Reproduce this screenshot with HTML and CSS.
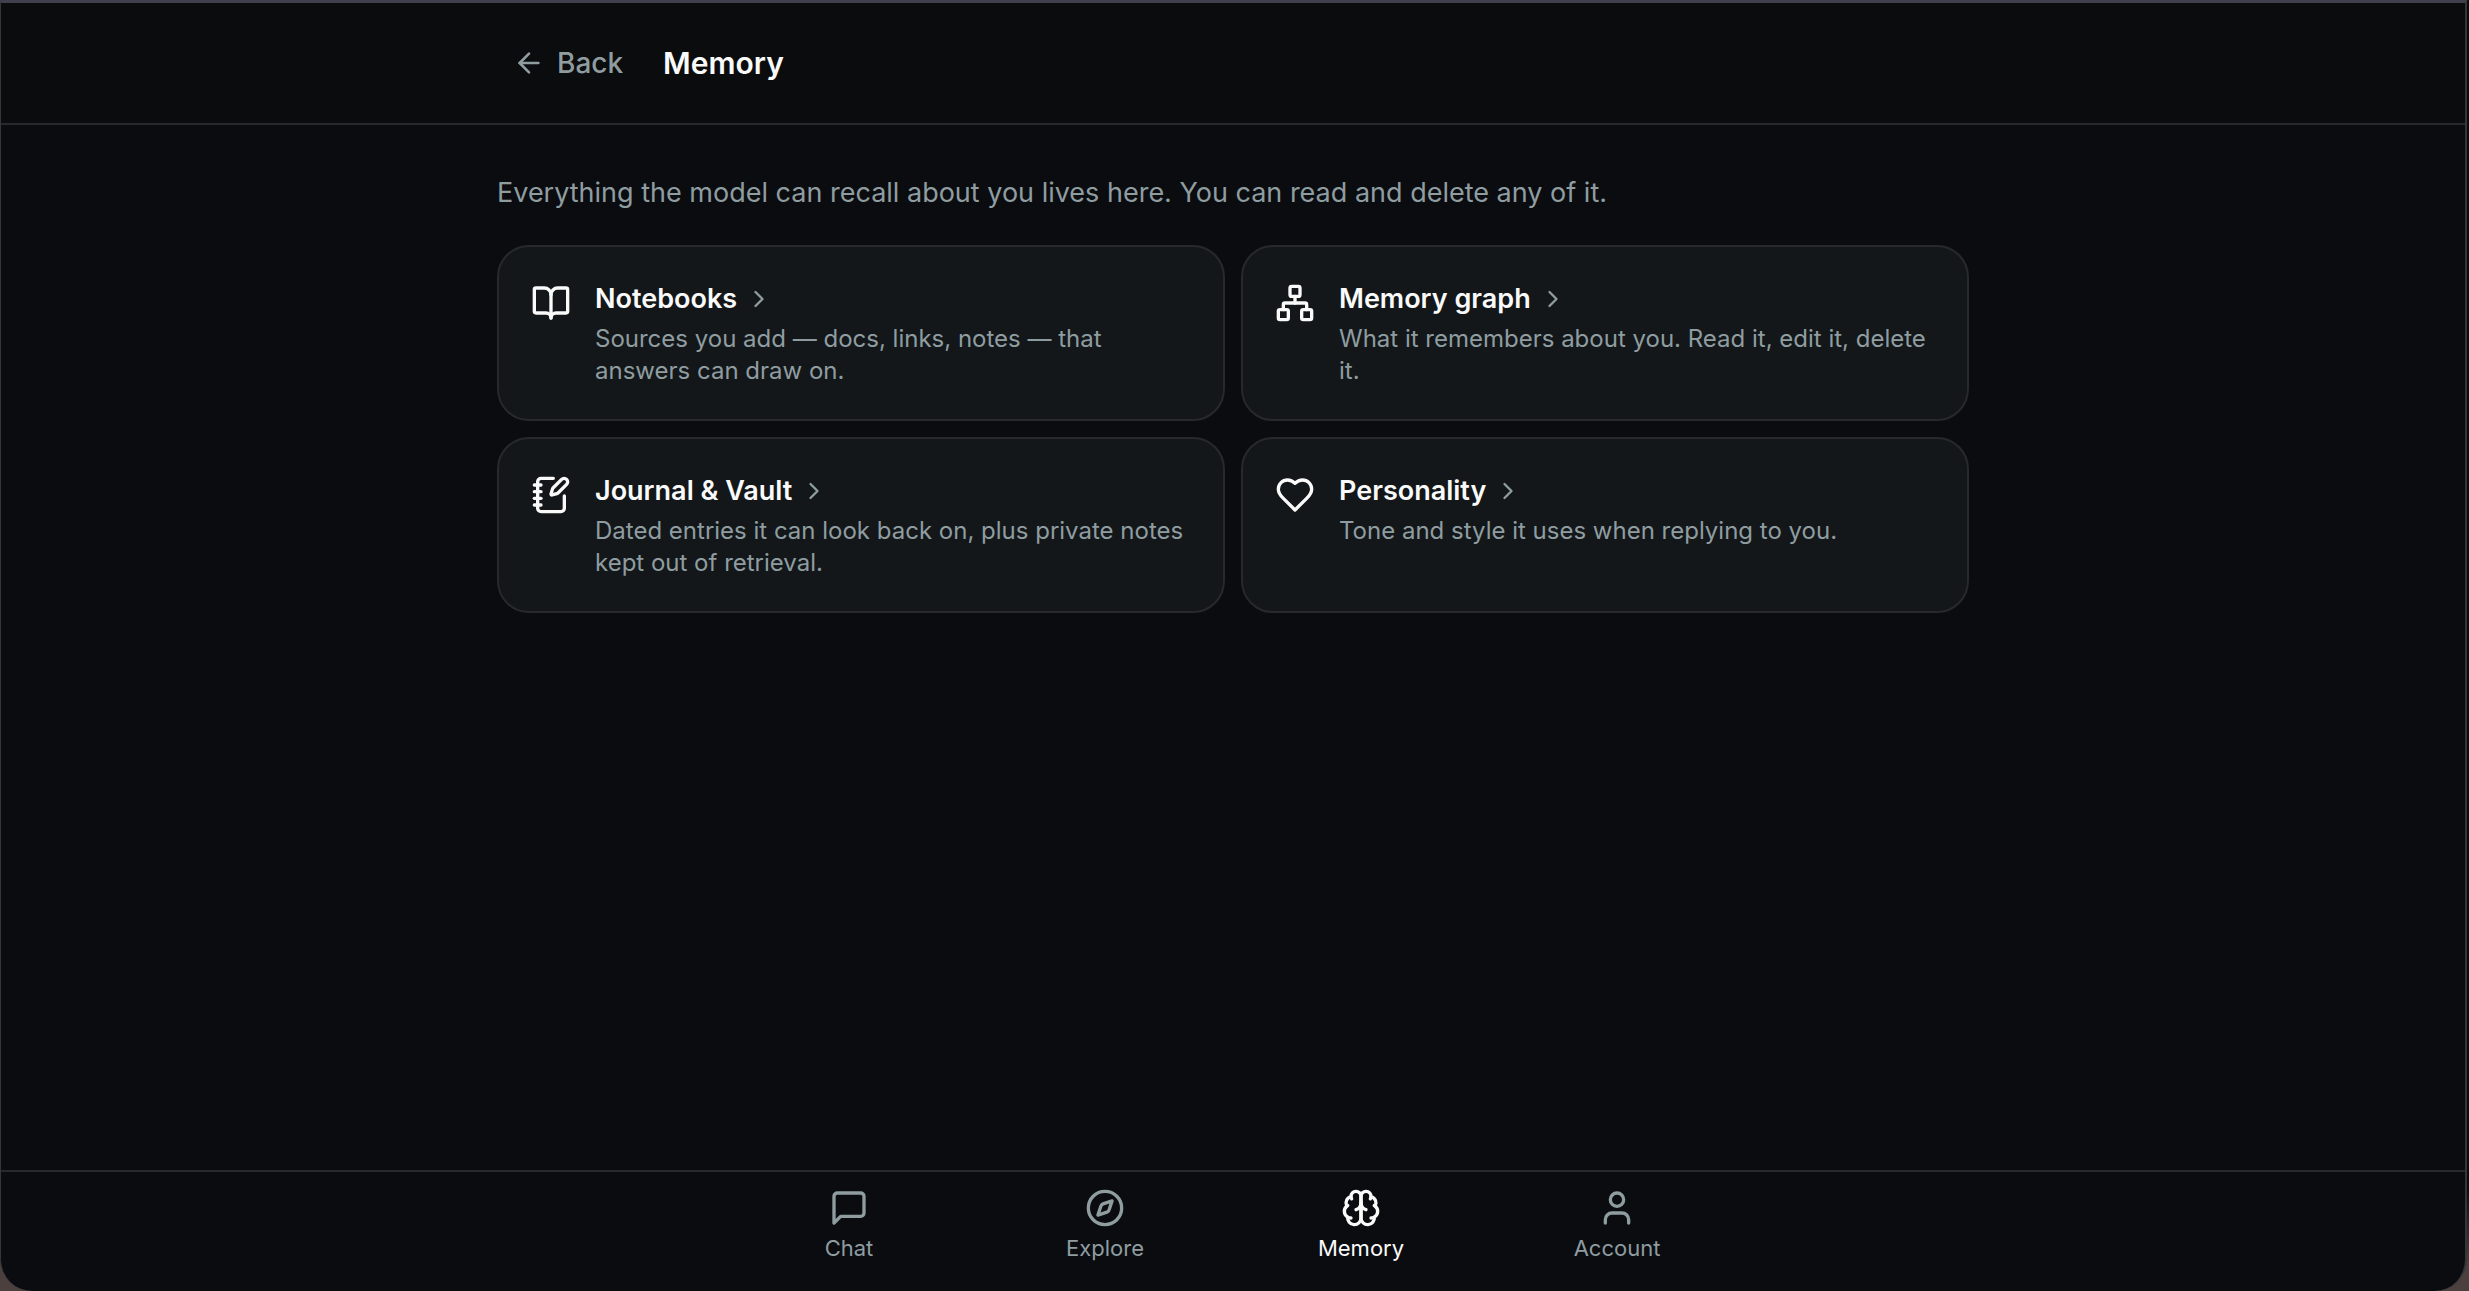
FILE: index.html
```html
<!DOCTYPE html>
<html lang="en">
<head>
<meta charset="utf-8">
<meta name="viewport" content="width=device-width, initial-scale=1">
<title>Memory</title>
<link rel="stylesheet" href="styles.css">
</head>
<body>
<div class="window">
  <header class="header">
    <div class="container header-row">
      <button class="back" type="button">
        <svg class="icon icon-md" viewBox="0 0 24 24" aria-hidden="true"><path d="m12 19-7-7 7-7"/><path d="M19 12H5"/></svg>
        Back
      </button>
      <h1 class="title">Memory</h1>
    </div>
  </header>

  <main class="container main">
    <p class="intro">Everything the model can recall about you lives here. You can read and delete any of it.</p>
    <div class="cards">
      <a class="card" href="#notebooks">
        <svg class="icon icon-lg" viewBox="0 0 24 24" aria-hidden="true"><path d="M12 7v14"/><path d="M3 18a1 1 0 0 1-1-1V4a1 1 0 0 1 1-1h5a4 4 0 0 1 4 4 4 4 0 0 1 4-4h5a1 1 0 0 1 1 1v13a1 1 0 0 1-1 1h-6a3 3 0 0 0-3 3 3 3 0 0 0-3-3z"/></svg>
        <div class="card-body">
          <h2 class="card-title">Notebooks <svg class="icon icon-sm" viewBox="0 0 24 24" aria-hidden="true"><path d="m9 18 6-6-6-6"/></svg></h2>
          <p class="card-text">Sources you add — docs, links, notes — that answers can draw on.</p>
        </div>
      </a>
      <a class="card" href="#graph">
        <svg class="icon icon-lg" viewBox="0 0 24 24" aria-hidden="true"><rect x="16" y="16" width="6" height="6" rx="1"/><rect x="2" y="16" width="6" height="6" rx="1"/><rect x="9" y="2" width="6" height="6" rx="1"/><path d="M5 16v-3a1 1 0 0 1 1-1h12a1 1 0 0 1 1 1v3"/><path d="M12 12V8"/></svg>
        <div class="card-body">
          <h2 class="card-title">Memory graph <svg class="icon icon-sm" viewBox="0 0 24 24" aria-hidden="true"><path d="m9 18 6-6-6-6"/></svg></h2>
          <p class="card-text">What it remembers about you. Read it, edit it, delete it.</p>
        </div>
      </a>
      <a class="card" href="#journal">
        <svg class="icon icon-lg" viewBox="0 0 24 24" aria-hidden="true"><path d="M13.4 2H6a2 2 0 0 0-2 2v16a2 2 0 0 0 2 2h12a2 2 0 0 0 2-2v-7.4"/><path d="M2 6h4"/><path d="M2 10h4"/><path d="M2 14h4"/><path d="M2 18h4"/><path d="M21.378 5.626a1 1 0 1 0-3.004-3.004l-5.01 5.012a2 2 0 0 0-.506.854l-.837 2.87a.5.5 0 0 0 .62.62l2.87-.837a2 2 0 0 0 .854-.506z"/></svg>
        <div class="card-body">
          <h2 class="card-title">Journal &amp; Vault <svg class="icon icon-sm" viewBox="0 0 24 24" aria-hidden="true"><path d="m9 18 6-6-6-6"/></svg></h2>
          <p class="card-text">Dated entries it can look back on, plus private notes kept out of retrieval.</p>
        </div>
      </a>
      <a class="card" href="#personality">
        <svg class="icon icon-lg" viewBox="0 0 24 24" aria-hidden="true"><path d="M19 14c1.490-1.460 3-3.210 3-5.500A5.500 5.500 0 0 0 16.500 3c-1.760 0-3 .5-4.500 2-1.500-1.500-2.740-2-4.500-2A5.500 5.500 0 0 0 2 8.500c0 2.300 1.500 4.050 3 5.500l7 7Z"/></svg>
        <div class="card-body">
          <h2 class="card-title">Personality <svg class="icon icon-sm" viewBox="0 0 24 24" aria-hidden="true"><path d="m9 18 6-6-6-6"/></svg></h2>
          <p class="card-text">Tone and style it uses when replying to you.</p>
        </div>
      </a>
    </div>
  </main>

  <nav class="nav" aria-label="Primary">
    <div class="nav-row">
      <a class="nav-item" href="#chat">
        <svg class="icon icon-lg" viewBox="0 0 24 24" aria-hidden="true"><path d="M21 15a2 2 0 0 1-2 2H7l-4 4V5a2 2 0 0 1 2-2h14a2 2 0 0 1 2 2z"/></svg>
        Chat
      </a>
      <a class="nav-item" href="#explore">
        <svg class="icon icon-lg" viewBox="0 0 24 24" aria-hidden="true"><path d="m16.240 7.760-1.804 5.411a2 2 0 0 1-1.265 1.265L7.760 16.240l1.804-5.411a2 2 0 0 1 1.265-1.265z"/><circle cx="12" cy="12" r="10"/></svg>
        Explore
      </a>
      <a class="nav-item active" href="#memory" aria-current="page">
        <svg class="icon icon-lg" viewBox="0 0 24 24" aria-hidden="true"><path d="M12 5a3 3 0 1 0-5.997.125 4 4 0 0 0-2.526 5.770 4 4 0 0 0 .556 6.588A4 4 0 1 0 12 18Z"/><path d="M12 5a3 3 0 1 1 5.997.125 4 4 0 0 1 2.526 5.770 4 4 0 0 1-.556 6.588A4 4 0 1 1 12 18Z"/><path d="M15 13a4.500 4.500 0 0 1-3-4 4.500 4.500 0 0 1-3 4"/><path d="M17.599 6.500a3 3 0 0 0 .399-1.375"/><path d="M6.003 5.125A3 3 0 0 0 6.401 6.500"/><path d="M3.477 10.896a4 4 0 0 1 .585-.396"/><path d="M19.938 10.500a4 4 0 0 1 .585.396"/><path d="M6 18a4 4 0 0 1-1.967-.516"/><path d="M19.967 17.484A4 4 0 0 1 18 18"/></svg>
        Memory
      </a>
      <a class="nav-item" href="#account">
        <svg class="icon icon-lg" viewBox="0 0 24 24" aria-hidden="true"><path d="M19 21v-2a4 4 0 0 0-4-4H9a4 4 0 0 0-4 4v2"/><circle cx="12" cy="7" r="4"/></svg>
        Account
      </a>
    </div>
  </nav>
</div>
</body>
</html>
```
FILE: styles.css
```css
:root {
  --bg: #0a0c10;
  --bar: #0a0c0e;
  --card: #131719;
  --line: #28292c;
  --text: #fafafa;
  --muted: #8f9da1;
}

* { box-sizing: border-box; }

body {
  margin: 0;
  background: linear-gradient(#0c0c0d 92%, #4c403f 98%);
  color: var(--text);
  font-family: Inter, "Liberation Sans", sans-serif;
  font-size: 28px;
  line-height: 40px;
}

h1, h2, p { margin: 0; }

a { color: inherit; text-decoration: none; }

.window {
  display: flex;
  flex-direction: column;
  min-height: 100vh;
  margin-right: 2px;
  overflow: hidden;
  background: var(--bg);
  border: 1px solid #35363a;
  border-top: 3px solid #42404f;
  border-right-width: 2px;
  border-bottom: 0;
  border-radius: 0 0 32px 32px;
}

.container {
  width: 100%;
  max-width: 1536px;
  margin: 0 auto;
  padding: 0 32px;
}

.header {
  background: var(--bar);
  border-bottom: 2px solid var(--line);
}

.header-row {
  display: flex;
  align-items: center;
  gap: 24px;
  height: 120px;
}

.back {
  display: flex;
  align-items: center;
  gap: 12px;
  padding: 8px 16px;
  border: 0;
  background: none;
  color: var(--muted);
  font: inherit;
  font-weight: 500;
}

.title {
  font-size: 30px;
  font-weight: 600;
}

.icon {
  flex: none;
  fill: none;
  stroke: currentColor;
  stroke-width: 2;
  stroke-linecap: round;
  stroke-linejoin: round;
}

.icon-sm { width: 28px; height: 28px; color: var(--muted); }
.icon-md { width: 32px; height: 32px; }
.icon-lg { width: 40px; height: 40px; }

.main {
  flex: 1;
  padding-top: 48px;
}

.intro {
  margin-bottom: 32px;
  color: var(--muted);
  font-size: 27px;
}

.cards {
  display: grid;
  grid-template-columns: repeat(2, 1fr);
  gap: 16px;
}

.card {
  display: flex;
  gap: 24px;
  padding: 32px;
  background: var(--card);
  border: 2px solid var(--line);
  border-radius: 32px;
}

.card > .icon { margin-top: 4px; }

.card-title {
  display: flex;
  align-items: center;
  gap: 8px;
  margin-bottom: 4px;
  font-size: 27px;
  font-weight: 600;
}

.card-text {
  color: var(--muted);
  font-size: 24px;
  line-height: 32px;
}

.nav {
  border-top: 2px solid var(--line);
}

.nav-row {
  display: grid;
  grid-template-columns: repeat(4, 1fr);
  max-width: 1024px;
  margin: 0 auto;
}

.nav-item {
  display: flex;
  flex-direction: column;
  align-items: center;
  gap: 4px;
  padding: 16px 8px 27px;
  color: var(--muted);
  font-size: 22px;
  line-height: 32px;
}

.nav-item.active { color: var(--text); }
```
